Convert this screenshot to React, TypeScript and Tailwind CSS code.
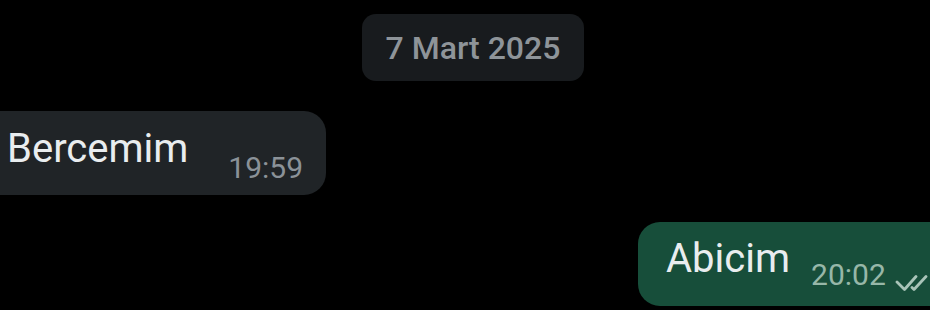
import React from 'react';

const DoubleCheck = () => <svg width="36" height="16" viewBox="0 0 36 16" fill="none" stroke="currentColor" strokeWidth="2.8" strokeLinecap="round" strokeLinejoin="round">
    <path d="M2 7 L9.5 14.5 L21 1.5" />
    <path d="M17 12.5 L19 14.5 L31 1.5" />
  </svg>;

export default function App() {
  return <div className="w-[930px] h-[310px] bg-black overflow-hidden font-['Roboto',sans-serif]">
      <div className="flex justify-center pl-[16px] pt-[14px]">
        <div className="h-[67px] w-[222px] rounded-[14px] bg-[#181b1e] flex items-center justify-center text-[32px] font-medium text-[#8e9499]">
          7 Mart 2025
        </div>
      </div>

      <div className="flex mt-[30px]">
        <div className="-ml-[20px] h-[84px] w-[346px] rounded-[22px] bg-[#202427] flex items-start pl-[27px]">
          <span className="pt-[18px] text-[40px] leading-[40px] text-[#e9edef]">Bercemim</span>
          <span className="ml-[40px] mt-[42px] text-[30px] leading-[30px] text-[#8b9298]">19:59</span>
        </div>
      </div>

      <div className="flex justify-end mt-[27px]">
        <div className="-mr-[30px] h-[84px] w-[322px] rounded-[22px] bg-[#174e3a] flex items-start pl-[28px]">
          <span className="pt-[17px] text-[40px] leading-[40px] text-[#e9edef]">Abicim</span>
          <span className="ml-[21px] mt-[38px] text-[30px] leading-[30px] text-[#97b7a8]">20:02</span>
          <span className="ml-[9px] mt-[53px] text-[#a9c4b8]">
            <DoubleCheck />
          </span>
        </div>
      </div>
    </div>;
}
